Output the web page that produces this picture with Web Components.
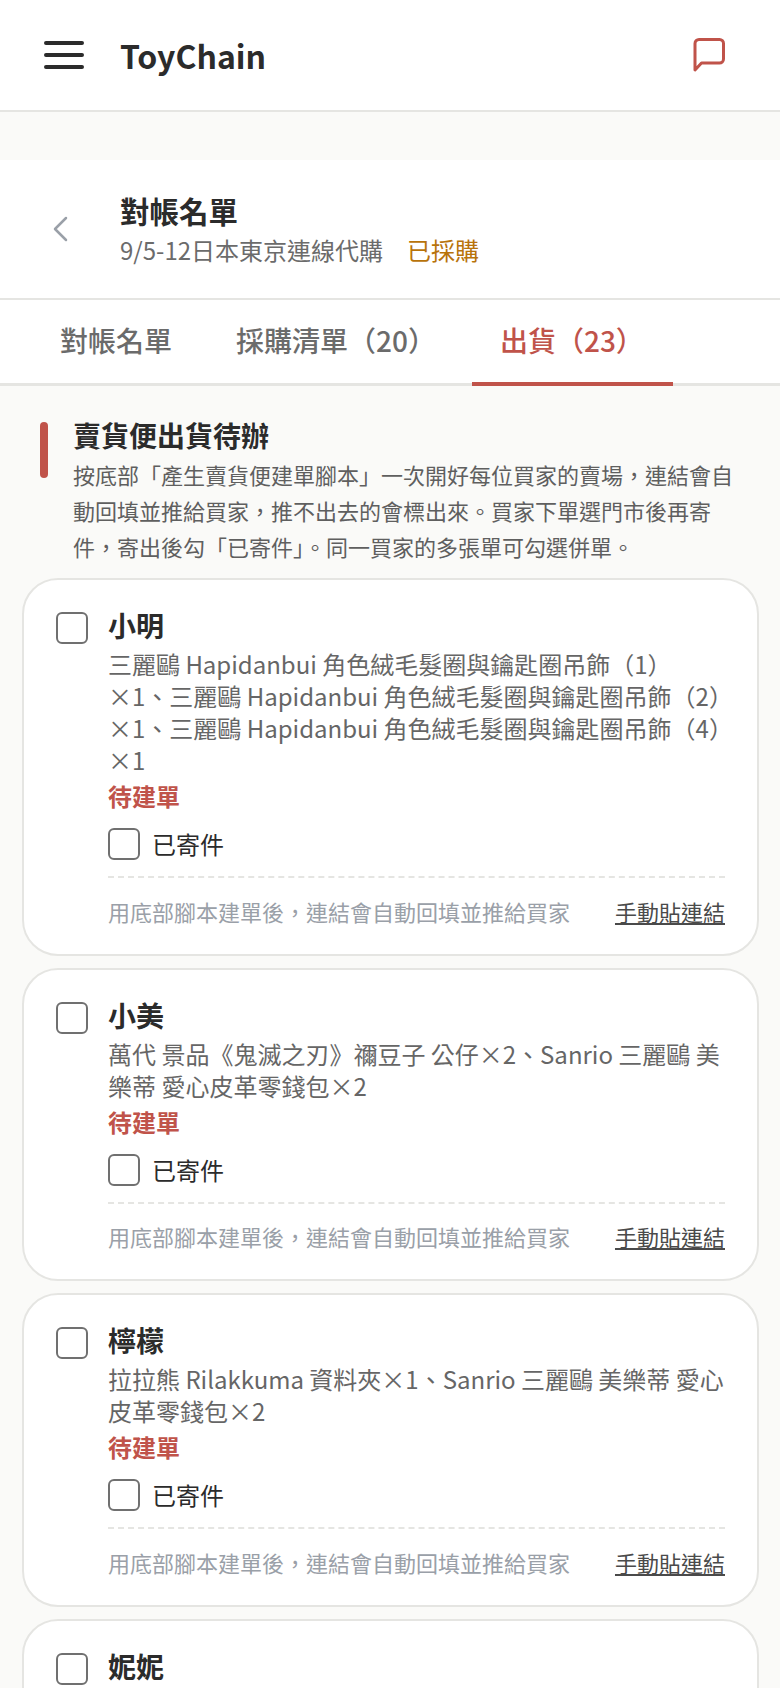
<!DOCTYPE html>
<html lang="zh-Hant">
<head>
<meta charset="utf-8">
<title>ToyChain</title>
<style>
  html, body { margin: 0; height: 1688px; overflow: hidden; }
  body {
    background: #fafaf8;
    color: #2b2b2b;
    font-family: "Noto Sans CJK TC", "Noto Sans", sans-serif;
  }
</style>
</head>
<body>
<app-header></app-header>
<page-title></page-title>
<tab-bar></tab-bar>
<note-box heading="賣貨便出貨待辦">按底部「產生賣貨便建單腳本」一次開好每位買家的賣場，連結會自動回填並推給買家，推不出去的會標出來。買家下單選門市後再寄件，寄出後勾「已寄件」。同一買家的多張單可勾選併單。</note-box>
<order-list>
  <order-card name="小明">三麗鷗 Hapidanbui 角色絨毛髮圈與鑰匙圈吊飾（1）×1、三麗鷗 Hapidanbui 角色絨毛髮圈與鑰匙圈吊飾（2）×1、三麗鷗 Hapidanbui 角色絨毛髮圈與鑰匙圈吊飾（4）×1</order-card>
  <order-card name="小美">萬代 景品《鬼滅之刃》禰豆子 公仔×2、Sanrio 三麗鷗 美樂蒂 愛心皮革零錢包×2</order-card>
  <order-card name="檸檬">拉拉熊 Rilakkuma 資料夾×1、Sanrio 三麗鷗 美樂蒂 愛心皮革零錢包×2</order-card>
  <order-card name="妮妮"></order-card>
</order-list>

<script>
class CheckBox extends HTMLElement {
  constructor() {
    super();
    this.attachShadow({ mode: 'open' });
    this.shadowRoot.innerHTML = `
      <style>
        :host {
          display: block;
          flex: none;
          box-sizing: border-box;
          width: 32px;
          height: 32px;
          background: #fff;
          border: 2px solid #707070;
          border-radius: 6px;
        }
      </style>
    `;
  }
}

class AppHeader extends HTMLElement {
  constructor() {
    super();
    this.attachShadow({ mode: 'open' });
    this.shadowRoot.innerHTML = `
      <style>
        :host {
          display: flex;
          align-items: center;
          box-sizing: border-box;
          height: 112px;
          padding: 0 51px 0 44px;
          background: #fff;
          border-bottom: 2px solid #e5e5e2;
        }
        .menu { display: block; width: 40px; height: 28px; }
        .brand {
          margin-left: 36px;
          font-size: 32px;
          font-weight: 700;
          color: #2b2b2b;
          flex: 1;
        }
        .chat { display: block; width: 36px; height: 36px; }
      </style>
      <svg class="menu" viewBox="0 0 40 28" fill="none" stroke="#2b2b2b" stroke-width="4" stroke-linecap="round">
        <path d="M2 2h36M2 14h36M2 26h36"/>
      </svg>
      <span class="brand">ToyChain</span>
      <svg class="chat" viewBox="0 0 36 36" fill="none" stroke="#c0534a" stroke-width="3" stroke-linejoin="round">
        <path d="M2 6.500a4 4 0 0 1 4-4h20.500a4 4 0 0 1 4 4V22a4 4 0 0 1-4 4H8.500L2 33z"/>
      </svg>
    `;
  }
}

class PageTitle extends HTMLElement {
  constructor() {
    super();
    this.attachShadow({ mode: 'open' });
    this.shadowRoot.innerHTML = `
      <style>
        :host {
          display: flex;
          align-items: center;
          box-sizing: border-box;
          height: 140px;
          margin-top: 48px;
          padding: 0 0 0 52px;
          background: #fff;
          border-bottom: 2px solid #e5e5e2;
        }
        svg { display: block; width: 16px; height: 26px; }
        .text { margin-left: 52px; }
        h1 {
          margin: 0 0 2px;
          font-size: 29.500px;
          line-height: 39px;
          font-weight: 700;
          color: #2b2b2b;
        }
        p {
          margin: 0;
          font-size: 24px;
          line-height: 36px;
          color: #6b6b6b;
          display: flex;
          gap: 24px;
        }
        .state { color: #b8730a; }
      </style>
      <svg viewBox="0 0 16 26" fill="none" stroke="#9aa0a8" stroke-width="2.500" stroke-linecap="round" stroke-linejoin="round">
        <path d="M14 2 3 13l11 11"/>
      </svg>
      <div class="text">
        <h1>對帳名單</h1>
        <p><span>9/5-12日本東京連線代購</span><span class="state">已採購</span></p>
      </div>
    `;
  }
}

class TabBar extends HTMLElement {
  constructor() {
    super();
    this.attachShadow({ mode: 'open' });
    this.shadowRoot.innerHTML = `
      <style>
        :host {
          display: flex;
          gap: 8px;
          box-sizing: border-box;
          height: 86px;
          padding-left: 32px;
          background: #fff;
          border-bottom: 3px solid #e5e5e2;
        }
        .tab {
          box-sizing: border-box;
          height: 86px;
          padding: 0 28px;
          font-size: 28px;
          line-height: 80px;
          font-weight: 500;
          color: #6b6b6b;
        }
        .on {
          padding-right: 29px;
          color: #c0534a;
          border-bottom: 4px solid #c0534a;
        }
      </style>
      <div class="tab">對帳名單</div>
      <div class="tab">採購清單（20）</div>
      <div class="tab on">出貨（23）</div>
    `;
  }
}

class NoteBox extends HTMLElement {
  constructor() {
    super();
    this.attachShadow({ mode: 'open' });
    this.shadowRoot.innerHTML = `
      <style>
        :host {
          display: block;
          position: relative;
          padding: 30px 36px 0 73px;
        }
        .bar {
          position: absolute;
          left: 40px;
          top: 36px;
          width: 8px;
          height: 56px;
          border-radius: 4px;
          background: #c0534a;
        }
        h2 {
          margin: 0 0 2px;
          font-size: 28px;
          line-height: 38px;
          font-weight: 700;
          color: #2b2b2b;
        }
        p {
          margin: 0;
          font-size: 22px;
          line-height: 36px;
          color: #5f5f5f;
        }
      </style>
      <div class="bar"></div>
      <h2></h2>
      <p><slot></slot></p>
    `;
  }

  connectedCallback() {
    this.shadowRoot.querySelector('h2').textContent = this.getAttribute('heading');
  }
}

class OrderList extends HTMLElement {
  constructor() {
    super();
    this.attachShadow({ mode: 'open' });
    this.shadowRoot.innerHTML = `
      <style>
        :host {
          display: flex;
          flex-direction: column;
          gap: 12px;
          padding: 14px 21px 0 22px;
        }
      </style>
      <slot></slot>
    `;
  }
}

class OrderCard extends HTMLElement {
  constructor() {
    super();
    this.attachShadow({ mode: 'open' });
    this.shadowRoot.innerHTML = `
      <style>
        :host {
          display: flex;
          align-items: flex-start;
          gap: 20px;
          box-sizing: border-box;
          padding: 30px 32px 25px 32px;
          background: #fff;
          border: 2px solid #e5e5e2;
          border-radius: 36px;
        }
        check-box { margin-top: 2px; }
        .body { flex: 1; min-width: 0; }
        .name {
          margin: -3px 0 4px;
          font-size: 28px;
          line-height: 37px;
          font-weight: 700;
          color: #2b2b2b;
        }
        .items {
          font-size: 24px;
          line-height: 32px;
          color: #666;
        }
        .status {
          margin-top: 4px;
          font-size: 24px;
          line-height: 32px;
          font-weight: 700;
          color: #c0534a;
        }
        .sent {
          display: flex;
          align-items: center;
          gap: 12px;
          margin-top: 16px;
          font-size: 24px;
          line-height: 32px;
          color: #2b2b2b;
        }
        .sent check-box { margin-top: 0; }
        .foot {
          display: flex;
          justify-content: space-between;
          margin-top: 16px;
          padding-top: 14.500px;
          border-top: 2px dashed #e5e5e2;
          font-size: 22px;
          line-height: 36px;
          color: #9aa0a8;
        }
        .link {
          color: #4a4a4a;
          text-decoration: underline;
        }
      </style>
      <check-box></check-box>
      <div class="body">
        <div class="name"></div>
        <div class="items"><slot></slot></div>
        <div class="status">待建單</div>
        <div class="sent"><check-box></check-box><span>已寄件</span></div>
        <div class="foot"><span>用底部腳本建單後，連結會自動回填並推給買家</span><span class="link">手動貼連結</span></div>
      </div>
    `;
  }

  connectedCallback() {
    this.shadowRoot.querySelector('.name').textContent = this.getAttribute('name');
  }
}

customElements.define('check-box', CheckBox);
customElements.define('app-header', AppHeader);
customElements.define('page-title', PageTitle);
customElements.define('tab-bar', TabBar);
customElements.define('note-box', NoteBox);
customElements.define('order-list', OrderList);
customElements.define('order-card', OrderCard);
</script>
</body>
</html>
